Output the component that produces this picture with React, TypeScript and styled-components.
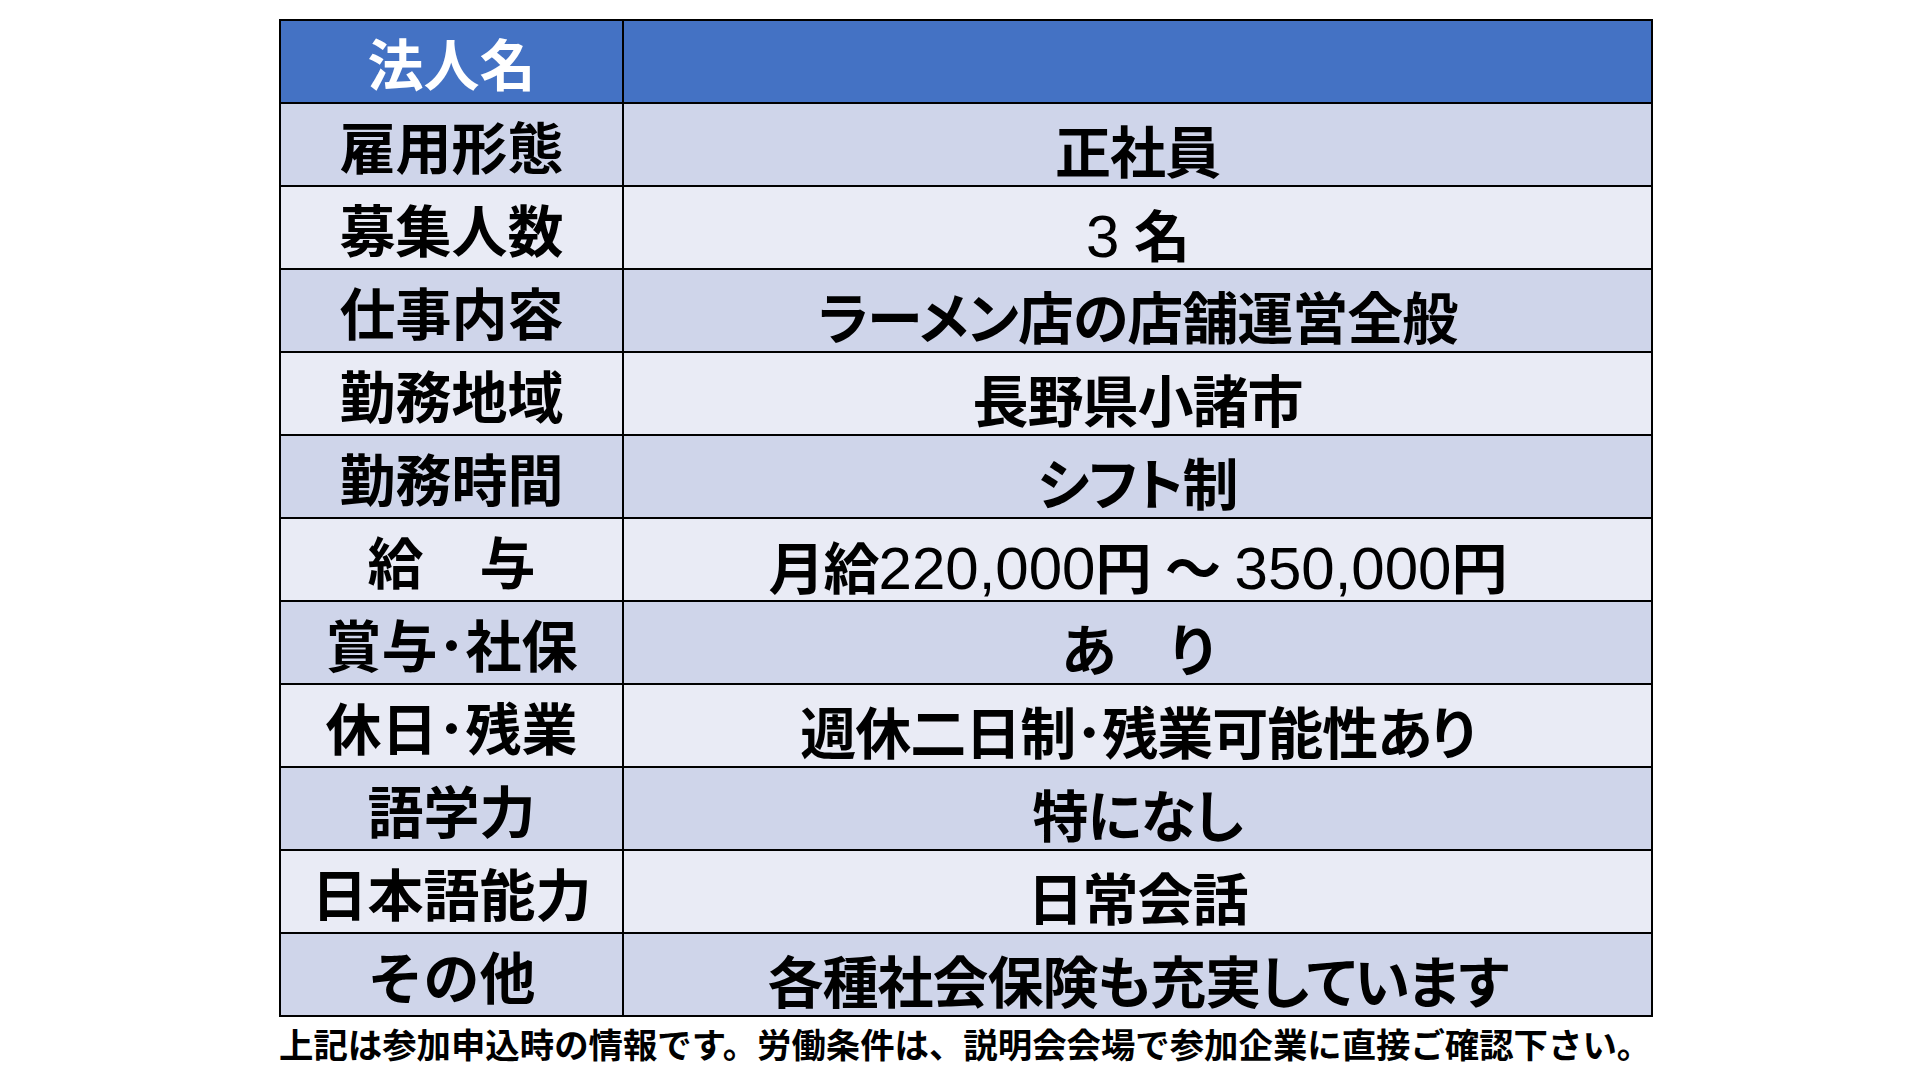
import React from "react";
import styled, { createGlobalStyle } from "styled-components";

const GlobalStyle = createGlobalStyle`
  body {
    margin: 0;
    background: #ffffff;
    font-family: "Liberation Sans", "Noto Sans CJK JP", sans-serif;
  }
`;

const Page = styled.main`
  width: 1920px;
  height: 1080px;
  box-sizing: border-box;
  padding: 19px 0 0 279px;
`;

const Table = styled.div`
  display: grid;
  grid-template-columns: 341px 1fr;
  grid-auto-rows: 81px;
  gap: 2px;
  padding: 2px;
  width: 1374px;
  box-sizing: border-box;
  background: #000;
`;

type Tone = "head" | "dark" | "light";

const tones: Record<Tone, string> = {
  head: "#4472c4",
  dark: "#cfd5ea",
  light: "#e9ebf5",
};

const Cell = styled.div<{ $tone: Tone; $value?: boolean }>`
  display: flex;
  align-items: center;
  justify-content: center;
  box-sizing: border-box;
  padding-top: ${(p) => (p.$value ? 18 : 10)}px;
  background: ${(p) => tones[p.$tone]};
  color: ${(p) => (p.$tone === "head" ? "#ffffff" : "#000000")};
  font-size: 56px;
  font-weight: 700;
  line-height: 1;
  white-space: nowrap;
  font-feature-settings: ${(p) => (p.$value ? '"palt"' : "normal")};
  letter-spacing: ${(p) => (p.$value ? "-1px" : "0")};
`;

const Text = styled.span`
  white-space: pre;
`;

const Num = styled.span`
  font-family: "Liberation Sans", sans-serif;
  font-weight: 400;
  font-size: 60px;
  letter-spacing: 0;
`;

const Note = styled.p`
  margin: 9px 0 0;
  font-size: 34.4px;
  font-weight: 700;
  line-height: 1.2;
  color: #000;
  white-space: nowrap;
`;

const rows: [string, React.ReactNode][] = [
  ["雇用形態", "正社員"],
  ["募集人数", <><Num>3</Num> 名</>],
  ["仕事内容", "ラーメン店の店舗運営全般"],
  ["勤務地域", "長野県小諸市"],
  ["勤務時間", "シフト制"],
  ["給　与", <>月給<Num>220,000</Num>円 ～ <Num>350,000</Num>円</>],
  ["賞与･社保", "あ　り"],
  ["休日･残業", "週休二日制･残業可能性あり"],
  ["語学力", "特になし"],
  ["日本語能力", "日常会話"],
  ["その他", "各種社会保険も充実しています"],
];

export default function App() {
  return (
    <Page>
      <GlobalStyle />
      <Table>
        <Cell $tone="head">法人名</Cell>
        <Cell $tone="head" $value />
        {rows.map(([label, value], i) => {
          const tone: Tone = i % 2 === 0 ? "dark" : "light";
          return (
            <React.Fragment key={i}>
              <Cell $tone={tone}>
                <Text>{label}</Text>
              </Cell>
              <Cell $tone={tone} $value>
                <Text>{value}</Text>
              </Cell>
            </React.Fragment>
          );
        })}
      </Table>
      <Note>上記は参加申込時の情報です。労働条件は、説明会会場で参加企業に直接ご確認下さい。</Note>
    </Page>
  );
}
